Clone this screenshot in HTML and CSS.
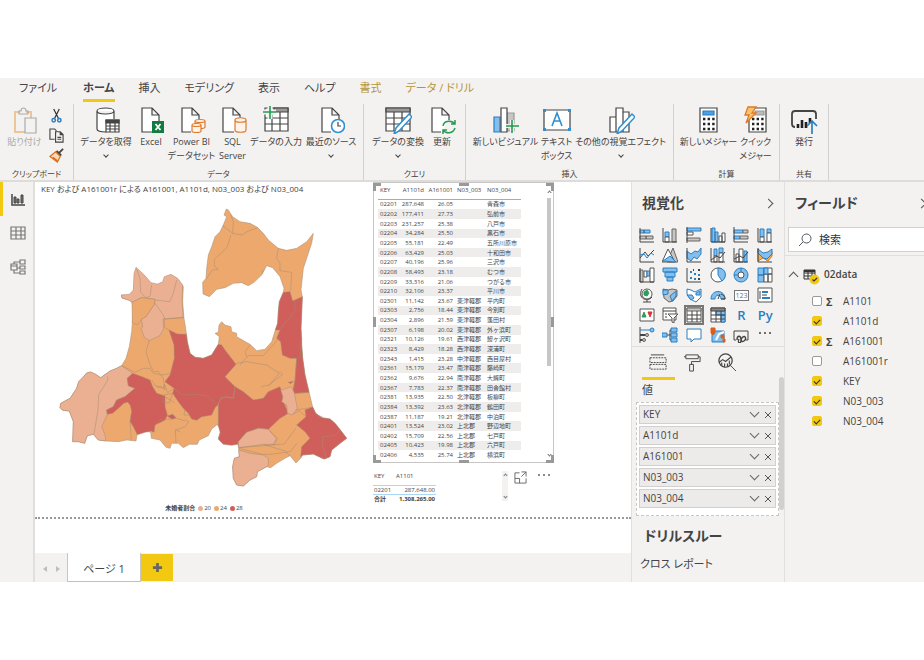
FILE: index.html
```html
<!DOCTYPE html>
<html lang="ja">
<head>
    <meta charset="UTF-8">
    <meta name="viewport" content="width=device-width, initial-scale=1.0">
    <title>Power BI Desktop</title>
    <link rel="stylesheet" href="styles.css">
</head>
<body>
    <header class="ribbon">
        <nav class="tabs">
            <a href="#" class="file">ファイル</a>
            <a href="#" class="active">ホーム</a>
            <a href="#">挿入</a>
            <a href="#">モデリング</a>
            <a href="#">表示</a>
            <a href="#">ヘルプ</a>
            <a href="#" class="context">書式</a>
            <a href="#" class="context">データ / ドリル</a>
        </nav>
        <div class="groups">
            <section class="group clipboard">
                <div class="tools">
                    <button class="tool disabled">
                        <svg viewBox="0 0 28 28"><path d="M9 6H4v20h10M20 12V6h-5" stroke="#ecc59b" stroke-width="2"/><path d="M8 8V5h2c0-4 5-4 5 0h2v3z" stroke="#aaa"/><path d="M14 12h11v15H14z" fill="#f3f2f1" stroke="#aaa"/></svg>
                        <span>貼り付け</span>
                    </button>
                    <div class="small-tools">
                        <button aria-label="切り取り"><svg viewBox="0 0 16 16"><path d="M5 1l5 10M11 1L6 11" stroke="#333" stroke-width="1.3"/><circle cx="5" cy="13" r="1.8" stroke="#2a7fc1" stroke-width="1.6"/><circle cx="11" cy="13" r="1.8" stroke="#2a7fc1" stroke-width="1.6"/></svg></button>
                        <button aria-label="コピー"><svg viewBox="0 0 16 16"><path d="M6 12H1V1h5l2 2M7 4h5l3 3v8H7zM12 4v3h3M9 10h4M9 12h4" stroke="#444" stroke-width="1.2"/></svg></button>
                        <button aria-label="書式のコピー"><svg viewBox="0 0 16 16"><path d="M15 1l-4 4M8 3l5 5" stroke="#444" stroke-width="2"/><path d="M7 4l5 5-3 6-8-6z" fill="#fbd9b5" stroke="#d8701b" stroke-width="1.3"/><path d="M4 10l5 4" stroke="#d8701b" stroke-width="2"/></svg></button>
                    </div>
                </div>
                <h2>クリップボード</h2>
            </section>
            <section class="group data">
                <div class="tools">
                    <button class="tool">
                        <svg viewBox="0 0 28 28"><path d="M14 26c-6 0-9-1-9-3V5c0-4 17-4 17 0v8M5 5c0 4 17 4 17 0" fill="#fff"/><path d="M14 14h13v12H14z" fill="#fff"/><path d="M14 14h13v3H14z" fill="#444"/><path d="M14 20h13M14 23h13M18 17v9M23 17v9"/></svg>
                        <span>データを取得</span><i class="chev"></i>
                    </button>
                    <button class="tool">
                        <svg viewBox="0 0 28 28"><path d="M15 26H5V2h10l7 7v6M15 2v7h7" fill="#fff"/><path d="M15 15h12v12H15z" fill="#107c41" stroke="none"/><path d="M18.500 18l5 6M23.500 18l-5 6" stroke="#fff" stroke-width="1.8"/></svg>
                        <span>Excel</span>
                    </button>
                    <button class="tool">
                        <svg viewBox="0 0 28 28"><path d="M13 26H4V2h10l7 7v4M14 2v7h7" fill="#fff"/><g fill="#fdf3ea" stroke="#dd7a2b"><path d="M17 15v6c0 2 10 2 10 0v-6c0-2-10-2-10 0c0 2 10 2 10 0"/><path d="M14 19v6c0 2 9 2 9 0v-6c0-2-9-2-9 0c0 2 9 2 9 0"/></g></svg>
                        <span>Power BI<br>データセット</span>
                    </button>
                    <button class="tool">
                        <svg viewBox="0 0 28 28"><path d="M15 26H4V2h10l7 7v3M14 2v7h7" fill="#fff"/><path d="M16 14v10c0 3 11 3 11 0V14c0-3-11-3-11 0c0 3 11 3 11 0" fill="#fdf3ea" stroke="#dd7a2b"/></svg>
                        <span>SQL<br>Server</span>
                    </button>
                    <button class="tool">
                        <svg viewBox="0 0 28 28"><path d="M3 2h23v23H3z" fill="#fff"/><path d="M12 2h14v4H12z" fill="#999"/><path d="M3 12h23M3 18h23M10 8v17M18 6v19"/><path d="M8 0v13M1 6h13" stroke="#f3f2f1" stroke-width="5"/><path d="M8 0v13M1 6h13" stroke="#259a53" stroke-width="1.6"/></svg>
                        <span>データの入力</span>
                    </button>
                    <button class="tool">
                        <svg viewBox="0 0 28 28"><path d="M14 26H5V2h10l7 7v4M15 2v7h7" fill="#fff"/><circle cx="21" cy="20" r="6.500" fill="#fff" stroke="#2f8fd0" stroke-width="1.6"/><path d="M21 16v4h3"/></svg>
                        <span>最近のソース</span><i class="chev"></i>
                    </button>
                </div>
                <h2>データ</h2>
            </section>
            <section class="group query">
                <div class="tools">
                    <button class="tool">
                        <svg viewBox="0 0 28 28"><path d="M2 2h24v23H2z" fill="#fff"/><path d="M2 2h24v4H2z" fill="#999"/><path d="M2 12h24M2 18h24M10 6v19M18 6v19"/><path d="M25 8l3 3-13 14-5 3 2-6z" fill="#fff" stroke="#2f8fd0" stroke-width="1.500"/></svg>
                        <span>データの変換</span><i class="chev"></i>
                    </button>
                    <button class="tool">
                        <svg viewBox="0 0 28 28"><path d="M13 26H4V2h10l7 7v5M14 2v7h7" fill="#fff"/><path d="M15 20c1-6 9-6 12-2M27 14v4h-4M27 22c-2 6-9 6-12 2M15 28v-4h4" stroke="#259a53" stroke-width="1.500"/></svg>
                        <span>更新</span>
                    </button>
                </div>
                <h2>クエリ</h2>
            </section>
            <section class="group insert">
                <div class="tools">
                    <button class="tool">
                        <svg viewBox="0 0 28 28"><path d="M15 7h7v18h-7z" fill="#c8c6c4" stroke="#999"/><path d="M2 11h6v15H2z" fill="#83beec" stroke="#2a7fc1"/><path d="M9 2h6v24H9z" fill="#fff"/><path d="M20 14v13M14 20h13" stroke="#f3f2f1" stroke-width="4"/><path d="M20 14v13M14 20h13" stroke="#259a53" stroke-width="1.600"/></svg>
                        <span>新しいビジュアル</span>
                    </button>
                    <button class="tool">
                        <svg viewBox="0 0 28 28"><path d="M1 4h26v20H1z" fill="#fff"/><path d="M9 20l5-13 5 13M11 15h6" stroke="#2f8fd0" stroke-width="1.600"/><path d="M0 3h3v3H0zM25 3h3v3h-3zM0 22h3v3H0zM25 22h3v3h-3z" fill="#2f8fd0" stroke="none"/></svg>
                        <span>テキスト<br>ボックス</span>
                    </button>
                    <button class="tool">
                        <svg viewBox="0 0 28 28"><path d="M3 11h6v15H3zM9 2h7v24H9zM16 6h6v20h-6z" fill="#fff"/><path d="M25 8l3 3-13 14-5 3 2-6z" fill="#fff" stroke="#2f8fd0" stroke-width="1.500"/></svg>
                        <span>その他の視覚エフェクト</span><i class="chev"></i>
                    </button>
                </div>
                <h2>挿入</h2>
            </section>
            <section class="group calc">
                <div class="tools">
                    <button class="tool">
                        <svg viewBox="0 0 28 28"><path d="M5 2h17v24H5z" fill="#fff"/><path d="M8 5h11v4H8z" fill="#4aa0e0" stroke="#2a7fc1"/><path d="M8 13h12M8 18h12M8 23h12" stroke="#222" stroke-width="2.400" stroke-dasharray="2.400 2.200"/></svg>
                        <span>新しいメジャー</span>
                    </button>
                    <button class="tool">
                        <svg viewBox="0 0 28 28"><path d="M7 2h17v24H7z" fill="#fff"/><path d="M13 5h9v4h-9z" fill="#bbb" stroke="#999"/><path d="M10 13h12M10 18h12M10 23h12" stroke="#222" stroke-width="2.400" stroke-dasharray="2.400 2.200"/><path d="M6 1h8l-4 6h4L4 17l3-8H3z" fill="#fbc16b" stroke="#dd7a2b" stroke-width="1.300"/></svg>
                        <span>クイック<br>メジャー</span>
                    </button>
                </div>
                <h2>計算</h2>
            </section>
            <section class="group share">
                <div class="tools">
                    <button class="tool">
                        <svg viewBox="0 0 28 28"><path d="M5 21c-2 0-3-1-3-3V8c0-2 1-3 3-3h18c2 0 3 1 3 3v5" stroke-width="1.800"/><path d="M8 22v-4M12 22v-8M16 22v-6M20 17v-5" stroke="#222" stroke-width="2.600"/><path d="M22 28V15M17 20l5-5 5 5" stroke="#2a7fc1" stroke-width="1.700"/></svg>
                        <span>発行</span>
                    </button>
                </div>
                <h2>共有</h2>
            </section>
        </div>
    </header>

    <main class="workspace">
        <nav class="views">
            <button class="current" aria-label="レポート"><svg viewBox="0 0 16 16"><path d="M2 3v11h13" stroke="#444" stroke-width="1.500"/><path d="M4 6h2v6H4zM7 8h2v4H7zM11 4h2v8h-2z" fill="#777" stroke="#444"/></svg></button>
            <button aria-label="データ"><svg viewBox="0 0 16 16"><path d="M1 2h14v12H1zM1 6h14M1 10h14M6 2v12M11 2v12" stroke="#777" stroke-width="1.200"/></svg></button>
            <button aria-label="モデル"><svg viewBox="0 0 16 16"><path d="M1 5h6v6H1zM10 1h5v4h-5zM10 7h5v3h-5zM10 12h5v3h-5zM1 7h6M4 5V3h6M7 9h3M4 11v3h6" stroke="#777" stroke-width="1.200"/></svg></button>
        </nav>

        <section class="canvas">
            <div class="report">
                <div class="map">
                    <h3>KEY および A161001r による A161001, A1101d, N03_003 および N03_004</h3>
                    <svg viewBox="0 0 930 900" role="img" aria-label="青森県の地図">
                        <path class="mid" d="M214 300l2 9 22 7 8 6 4 23-3 35-2 30-7 45-10 35-13 22-15 8-20 8-28 20-15-10-15-7-12 3-12 14-12 12-6 20-20 30-28 15-2 13 8 8 20 2 12 32-2 60 17 0 19 5 8-23 18-4 15 17 23 3 37 2 25-5 28 3 4-23 23-7 17 4 2 18 26 5 18 22 12 3 5-15 20 0 15 13 18-10 24 0 6-13 27-13 10-20 15-12 8 2 3 18-6 20 15 15 25 3 18-3 3 15 2 25-15 5-5 25 2 35 10 20 20 3 20-18 20-10 2-15 28-15 12 3 18-13 25-15 15-8 18 22 14-14 6-10 32-3 32 15 18-7 5-20 25-20 20-15-15-20-20-25-15-13-25-4-18-13-9-19-11-46-12-50-7-50-3-40 0-20-2-30 4-95-4-20 7-65 25-75 5-30-20 25-30 20-30 6-25-6-30-25-15-20-18-18-22-12-30-5-22-15-13-20-6-3-7 18 8 5-10 25-10 20-15 15-10 30-10 25-5 40-2 30-10 12 1 35 19 8 22-22 25-5 25-13 25-2 20 9 17-10 23-22 15-28 18 6 22 27 12 35-2 12-12 28-3 30-2 35-7 20-11 35-20 23-25 4-20-19-40-23 0-10-15-5-2-15-18-5-10-10-8 10-2 22-10 3 13 10-3 23-20 32-25 10-25-3-15-12-8-35-5-40-5-30-4-50 2-45-15-20-20-12-20 7-5 15-15 7-20-4-20-23-25-23-6 18-2 50-12 13z"/>
                        <path class="low" d="M214 300l2 9 22 7 8 6 29-14 40 5-2 15-25 37-14 8 4 20-4 10 9 24 15 10 31-15 12-20-2-30 60-5-3-52 2-45-15-20-20-12-20 7-5 15-15 7-20-4-20-23-25-23-6 18-2 50-12 13z"/>
                        <path class="mid" d="M246 322l29-14 40 5-2 15-25 37-14 8-12 17-15-7z"/>
                        <path class="low" d="M215 512l33 23-16 15 3 22 20 8-30 25-25 10-10 20-20 10 2 13-17 37 10 25 3 18-23-3-15-17-18 4-8 23-19-5h-17l2-60-12-32-20-2-8-8 2-13 28-15 20-30 6-20 12-12 12-14 12-3 15 7 15 10 28-20 20-8z"/>
                        <path class="high" d="M248 535l28 10 24 10 8 20 12 20 25 8v32l7 25-7 15-30 15-3 22-10-4-17 4-23 7-12-24-10-16 5-30-4-18-8-10-12 4-16 15-17 15-16 3-2-13 20-10 10-20 25-10 30-25-20-8-3-22z"/>
                        <path class="high" d="M357 405l25 12 27 1 3 22 8 35 15 12 25 3 25-10 20-32 10 2 10 15 33 43-33 37 30 30-5 35-20-5-18 5-7 18-10 10-10 22-30 5-15 11-15-4-10-17-15-15-15-20-17-25 4-15-27-20 15-20 13-50-1-40z"/>
                        <path class="high" d="M555 575l25 15 30 25 30-5 15-20 35-15 7 25 3 20 15 35-25 15-35 33-30-3-35 12-25 28-2 8-18 3-25-3-15-15 6-20-6-20 0-62 7-21 18-5 20 5z"/>
                        <path class="high" d="M700 292l20-2 8 28 29-13-4 95 2 50 3 40 7 50 12 52-42 3-7-5 7-35 5-65-20 0-23-10-5-40-12-10 10-25h-14l7-20 2-35 3-30z"/>
                        <path class="high" d="M788 636l-23 9 3 20-28 25 25 20 15 20-25 25-3 30 6-5 32-3 32 15 18-7 5-20 25-20 20-15-15-20-20-25-15-13-25-4-18-13z"/>
                        <path class="low" d="M692 585l12-3 18-7 10 15 5 25 5 25-14 20-16-5-2-25-15-10 4-15zM565 740l25-28 35-12 30 3 25 27-5 18-35 0-74 10zM566 765l34 10 40 5 15 10v20l-5 5-28 15-2 15-20 10-20 18-20-3-10-20-2-35 5-25 15-5z"/>
                        <path class="high" d="M352 663l16-5 10 10-12 5zM715 562l15-3-8 7z"/>
                        <path class="edge" d="M542 60l8 20-2 35-30-23M548 115l28 5 15-10 32-12M543 120l-12 38-38 35 0 20 12 10-18 2-18 27M685 160l-5 30 10 15 0 22 35 5-3 57M260 222l10 30 2 40 16 16 12-4 5-34M380 255l-10 40-10 25-45-5M315 325l25 35 4 12 58-4M342 372l2 25 15 10M298 435l-10 35 12 40 10 18M172 544l2 10-28 45-2 45-12 74M215 512l40 20 25-12 20 0 10 15 25 5 30-5M310 530l15 0 15 20 5 35-10-10-18-2-12-18M320 575l20 5 3-12 10 25 16-12M340 600l28-5-10 28h-20zM345 605l28 18M372 580l25 20 40-2 35 5 33 28M510 610l20-3 20 3 5-25M560 505l30-5 60 10 38 25-30 35-25 5M590 485l-5-15 15-20M570 510l25-28 45 0 50-55M688 528l10 10-45 35M315 690l15-15 50-5 25 8M378 745l-2-40 30-10 10-15-10-6M376 705l15 5M240 680l4 56M740 490l-5 65-5 35M735 318v30l-45 55M755 430l-5 60M735 595l42-3M737 645l50-8M768 665l-20-18-20 10M655 703l25 27-12 20-100 8M668 750l35-3 35-48M566 760l70 18 25 0 60-8 20-25M640 748l65 20 15 14M818 725l0 30 12 37M818 725l35-3 15-15 8 3M405 640l-3 20 16 0M640 235l-5-5 8-5M800 660l18 6"/>
                    </svg>
                    <ul class="legend">
                        <li><b>未婚者割合</b></li>
                        <li class="dot c20">20</li>
                        <li class="dot c24">24</li>
                        <li class="dot c28">28</li>
                    </ul>
                </div>

                <div class="side">
                    <div class="frame">
                        <i class="grip tl"></i><i class="grip tc"></i><i class="grip tr"></i><i class="grip ml"></i>
                        <i class="grip mr"></i><i class="grip bl"></i><i class="grip bc"></i><i class="grip br"></i>
                        <table class="cities">
                            <thead>
                                <tr><th>KEY</th><th>A1101d</th><th>A161001</th><th>N03_003</th><th>N03_004</th></tr>
                            </thead>
                            <tbody>
                                <tr><td>02201</td><td>287,648</td><td>26.05</td><td></td><td>青森市</td></tr>
                                <tr><td>02202</td><td>177,411</td><td>27.73</td><td></td><td>弘前市</td></tr>
                                <tr><td>02203</td><td>231,257</td><td>25.38</td><td></td><td>八戸市</td></tr>
                                <tr><td>02204</td><td>34,284</td><td>25.50</td><td></td><td>黒石市</td></tr>
                                <tr><td>02205</td><td>55,181</td><td>22.49</td><td></td><td>五所川原市</td></tr>
                                <tr><td>02206</td><td>63,429</td><td>25.03</td><td></td><td>十和田市</td></tr>
                                <tr><td>02207</td><td>40,196</td><td>25.96</td><td></td><td>三沢市</td></tr>
                                <tr><td>02208</td><td>58,493</td><td>23.18</td><td></td><td>むつ市</td></tr>
                                <tr><td>02209</td><td>33,316</td><td>21.06</td><td></td><td>つがる市</td></tr>
                                <tr><td>02210</td><td>32,106</td><td>23.37</td><td></td><td>平川市</td></tr>
                                <tr><td>02301</td><td>11,142</td><td>23.67</td><td>東津軽郡</td><td>平内町</td></tr>
                                <tr><td>02303</td><td>2,756</td><td>18.44</td><td>東津軽郡</td><td>今別町</td></tr>
                                <tr><td>02304</td><td>2,896</td><td>21.59</td><td>東津軽郡</td><td>蓬田村</td></tr>
                                <tr><td>02307</td><td>6,198</td><td>20.02</td><td>東津軽郡</td><td>外ヶ浜町</td></tr>
                                <tr><td>02321</td><td>10,126</td><td>19.61</td><td>西津軽郡</td><td>鰺ヶ沢町</td></tr>
                                <tr><td>02323</td><td>8,429</td><td>18.28</td><td>西津軽郡</td><td>深浦町</td></tr>
                                <tr><td>02343</td><td>1,415</td><td>23.28</td><td>中津軽郡</td><td>西目屋村</td></tr>
                                <tr><td>02361</td><td>15,179</td><td>23.47</td><td>南津軽郡</td><td>藤崎町</td></tr>
                                <tr><td>02362</td><td>9,676</td><td>22.94</td><td>南津軽郡</td><td>大鰐町</td></tr>
                                <tr><td>02367</td><td>7,783</td><td>22.37</td><td>南津軽郡</td><td>田舎館村</td></tr>
                                <tr><td>02381</td><td>13,935</td><td>22.50</td><td>北津軽郡</td><td>板柳町</td></tr>
                                <tr><td>02384</td><td>13,392</td><td>23.63</td><td>北津軽郡</td><td>鶴田町</td></tr>
                                <tr><td>02387</td><td>11,187</td><td>19.21</td><td>北津軽郡</td><td>中泊町</td></tr>
                                <tr><td>02401</td><td>13,524</td><td>23.02</td><td>上北郡</td><td>野辺地町</td></tr>
                                <tr><td>02402</td><td>15,709</td><td>22.56</td><td>上北郡</td><td>七戸町</td></tr>
                                <tr><td>02405</td><td>10,423</td><td>19.98</td><td>上北郡</td><td>六戸町</td></tr>
                                <tr><td>02406</td><td>4,535</td><td>25.74</td><td>上北郡</td><td>横浜町</td></tr>
                            </tbody>
                        </table>
                        <div class="scroll"><i class="up"></i><i class="thumb"></i><i class="down"></i></div>
                    </div>
                    <div class="total-row">
                        <table class="total">
                            <thead><tr><th>KEY</th><th>A1101</th></tr></thead>
                            <tbody><tr><td>02201</td><td>287,648.00</td></tr></tbody>
                            <tfoot><tr><td>合計</td><td>1,308,265.00</td></tr></tfoot>
                        </table>
                        <div class="scroll short"><i class="up"></i><i class="down"></i></div>
                        <button class="focus" aria-label="フォーカス モード"><svg viewBox="0 0 14 14"><path d="M6 2H1v11h12V8M8 1h5v5M13 1L8 6M1 8h5v5" stroke="#666"/></svg></button>
                        <button class="more" aria-label="その他のオプション"><svg viewBox="0 0 14 4"><path d="M1 2h2M6 2h2M11 2h2" stroke="#666" stroke-width="1.500"/></svg></button>
                    </div>
                </div>
            </div>
            <footer class="pages">
                <button class="step" aria-label="前へ"><i class="prev"></i></button>
                <button class="step" aria-label="次へ"><i class="next"></i></button>
                <button class="page">ページ 1</button>
                <button class="add" aria-label="ページの追加"><svg viewBox="0 0 12 12"><path d="M6 1v10M1 6h10" stroke="#666" stroke-width="3"/></svg></button>
            </footer>
        </section>

        <aside class="viz">
            <div class="pane-head"><h1>視覚化</h1><button aria-label="折りたたむ"><i class="right"></i></button></div>
            <div class="gallery">
                <button><svg viewBox="0 0 16 16"><path class="b" d="M1 3h10v3H1z"/><path class="g" d="M1 9h13v3H1z"/><path d="M5 3v3M7 9v3M1 1v14h14"/></svg></button>
                <button><svg viewBox="0 0 16 16"><path class="b" d="M3 5h4v5H3z"/><path class="w" d="M3 10h4v5H3z"/><path class="g" d="M10 2h4v13h-4z"/><path d="M1 1v14h14"/></svg></button>
                <button><svg viewBox="0 0 16 16"><path class="b" d="M1 1h14v3H1z"/><path class="w" d="M1 5h6v3H1z"/><path class="g" d="M1 11h13v3H1z"/><path d="M1 0v16"/></svg></button>
                <button><svg viewBox="0 0 16 16"><path class="b" d="M2 1h3v14H2zM5 5h3v10H5z"/><path class="w" d="M9 9h3v6H9zM12 6h3v9h-3z"/><path d="M1 1v14h14"/></svg></button>
                <button><svg viewBox="0 0 16 16"><path class="b" d="M1 3h9v3H1zM1 9h6v3H1z"/><path class="g" d="M10 3h5v3h-5zM7 9h8v3H7z"/><path d="M1 0v15h14"/></svg></button>
                <button><svg viewBox="0 0 16 16"><path class="b" d="M3 2h4v8H3zM10 2h4v4h-4z"/><path class="w" d="M3 10h4v5H3zM10 6h4v9h-4z"/><path d="M1 1v14h14"/></svg></button>

                <button><svg viewBox="0 0 16 16"><path d="M1 1v14h14M1 11l5-6 3 4 6-6"/><path class="l" d="M1 8l4-1 3 4 4-5 3 2"/></svg></button>
                <button><svg viewBox="0 0 16 16"><path class="g" d="M5 15L11 1l5 14z"/><path class="w" d="M0 15l6-13 7 13z"/><path class="b" d="M1 14l7-5 6 6z"/></svg></button>
                <button><svg viewBox="0 0 16 16"><path class="b" d="M1 4l4 3 4-3 3 1 3-4v6l-4 5-3-2-3 4-4-3z"/><path d="M1 1v14h14"/></svg></button>
                <button><svg viewBox="0 0 16 16"><path class="b" d="M4 2h3v7H4zM9 1h4v5H9z"/><path class="w" d="M4 9h3v6H4zM9 6h4v9H9z"/><path d="M1 1v14h14M1 13l6-4 3 2 5-6"/></svg></button>
                <button><svg viewBox="0 0 16 16"><path class="w" d="M3 7h3v8H3zM6 2h4v13H6z"/><path class="b" d="M11 4h3v11h-3z"/><path d="M1 1v14h14M1 12l6-3 3 2 5-6"/></svg></button>
                <button><svg viewBox="0 0 16 16"><path d="M1 3l5 7 5 0 4-5v4l-4 5-5-3-5 3z" fill="#f5b057" stroke="#c77a27"/><path class="b" d="M1 2l5 4 5-1 4-3v5l-5 5-4-1-5-5z"/><path d="M1 1v14h14"/></svg></button>

                <button><svg viewBox="0 0 16 16"><path class="g" d="M1 3h3v12H1z"/><path class="w" d="M5 4h3v6H5z"/><path class="b" d="M8 4h3v5H8z"/><path class="w" d="M11 1h4v14h-4z"/><path d="M1 1v14h14"/></svg></button>
                <button><svg viewBox="0 0 16 16"><path class="b" d="M1 1h14v4H1zM3 5h10v5H3zM5 10h6v4H5z"/></svg></button>
                <button><svg viewBox="0 0 16 16"><path d="M1 1v14h14"/><path class="l" d="M4 5h2M8 7h2M4 11h2M12 8h2M8 12h2" stroke-width="2"/><path d="M12 3h2M7 3h1M12 12h2" stroke-width="2"/></svg></button>
                <button><svg viewBox="0 0 16 16"><circle class="w" cx="8" cy="8" r="7"/><path class="b" d="M8 1c9 0 9 10 4 13L8 8z"/></svg></button>
                <button><svg viewBox="0 0 16 16"><circle class="b" cx="8" cy="8" r="7"/><circle class="w" cx="8" cy="8" r="3"/><path d="M8 1v4M1 8h4" class="l"/></svg></button>
                <button><svg viewBox="0 0 16 16"><path class="b" d="M1 1h6v7H1zM1 8h6v7H1z"/><path class="w" d="M7 1h8v6H7zM7 7h4v8H7zM11 7h4v8h-4z"/><path class="b" d="M7 1h4v6H7z"/></svg></button>

                <button><svg viewBox="0 0 16 16"><circle class="w" cx="8" cy="7" r="5"/><path d="M5 5l3-2 2 3-2 3-3-1z" fill="#2e9d5c" stroke="#2e9d5c"/><path d="M3 2c-5 9 5 14 10 8M8 13v2M4 15h8"/></svg></button>
                <button><svg viewBox="0 0 16 16"><path class="g" d="M1 2l5 1 4-1 5 1v6l-4 5-4 1-5-4z"/><path class="b" d="M1 3h5v4l-5 1zM8 9l6-5v5l-4 5z"/></svg></button>
                <button><svg viewBox="0 0 16 16"><path class="w o" d="M1 2l4 1 4 2 6-3v8l-5 5-6-3-3-5z"/><path class="b" d="M1 8h5l2 3-3 2zM10 6l4-2v4h-4z"/></svg></button>
                <button><svg viewBox="0 0 16 16"><path class="b" d="M1 12C1 2 15 2 15 12h-4c0-5-6-5-6 0z"/><path d="M8 12l2-5M11 7c3 1 4 3 4 5h-4"/></svg></button>
                <button class="num"><span>123</span></button>
                <button><svg viewBox="0 0 16 16"><path class="w" d="M1 1h14v14H1z"/><path d="M3 4v8"/><path class="l" d="M5 5h6M5 11h8" stroke-width="2"/><path d="M5 8h5"/></svg></button>

                <button><svg viewBox="0 0 16 16"><path class="w" d="M1 2h14v12H1z"/><path d="M3 10l2-5 2 5z" fill="#2e9d5c" stroke="#2e9d5c"/><path d="M9 5h4l-2 5z" fill="#d33" stroke="#d33"/></svg></button>
                <button><svg viewBox="0 0 16 16"><path class="w" d="M1 1h13v12H1z"/><path d="M1 4h13M3 7h2M3 10h2"/><path class="w" d="M6 7h10l-4 4v5l-2-1v-4z"/></svg></button>
                <button class="picked"><svg viewBox="0 0 16 16"><path class="w" d="M1 1h14v14H1z"/><path class="g" d="M1 1h14v3H1z"/><path d="M1 8h14M1 12h14M6 4v11M11 4v11"/></svg></button>
                <button><svg viewBox="0 0 16 16"><path class="w" d="M1 1h14v14H1z"/><path class="b" d="M6 4h9v4H6zM11 8h4v7h-4z"/><path d="M1 1h14v3H1z" fill="#888"/><path d="M1 8h14M1 12h14M6 4v11M11 4v11"/></svg></button>
                <button class="word">R</button>
                <button class="word">Py</button>

                <button><svg viewBox="0 0 16 16"><path d="M1 0v16"/><path class="l" d="M1 3h10"/><circle class="b" cx="13" cy="3" r="2"/><path d="M1 8h6M1 13h3" stroke-width="2"/><circle class="g" cx="8" cy="8" r="1.500"/><circle class="g" cx="5" cy="13" r="1.500"/></svg></button>
                <button><svg viewBox="0 0 16 16"><path d="M5 8h4M8 8V3h2M8 8v5h2"/><path class="b" d="M0 6h5v4H0zM9 1h6v4H9zM9 6h6v4H9zM9 11h6v4H9z"/></svg></button>
                <button><svg viewBox="0 0 16 16"><path class="w o" d="M1 2h14v10H8l-3 3v-3H1z"/></svg></button>
                <button><svg viewBox="0 0 16 16"><path class="b" d="M2 4h12v11H2z"/><path d="M6 13l3-6 5-2" stroke="#fff" stroke-width="2"/><path d="M1 1h4v5L3 8 1 6zM11 8h3v3h-3zM13 12h2v3h-2z" fill="#d8601b" stroke="#d8601b"/></svg></button>
                <button><svg viewBox="0 0 16 16"><path d="M3 13H1V4h14v9h-2"/><path d="M4 13c0-5 4-5 4 0s-4 3-2-1M9 11c3-4 5 1 2 3s-4-2-1-4" stroke-width="1.400"/></svg></button>
                <button><svg viewBox="0 0 16 16"><path d="M2 6h2M7 6h2M12 6h2" stroke-width="1.500"/></svg></button>
            </div>
            <div class="modes">
                <button class="on" aria-label="フィールド"><svg viewBox="0 0 20 20"><path d="M2 2h14"/><path d="M1 5h17v5H1zM1 12h17v5H1z" stroke-dasharray="2 1"/></svg></button>
                <button aria-label="書式"><svg viewBox="0 0 20 20"><path d="M3 2h13v4H3zM16 4h2v5H9v3M7 12h4v7H7zM3 4H1"/></svg></button>
                <button aria-label="分析"><svg viewBox="0 0 20 20"><circle cx="9" cy="8" r="7" stroke-width="1.300"/><path d="M14 13l6 6"/><path d="M2 10l4-3 3 2 6-5M5 13v-3M8 15v-4M11 14v-3M13 12V8" stroke-width="1.200"/></svg></button>
            </div>
            <h4>値</h4>
            <ul class="well">
                <li>KEY<button aria-label="KEY のメニュー"><i class="open"></i></button><button aria-label="KEY の削除"><svg viewBox="0 0 8 8"><path d="M1 1l6 6M7 1L1 7"/></svg></button></li>
                <li>A1101d<button aria-label="A1101d のメニュー"><i class="open"></i></button><button aria-label="A1101d の削除"><svg viewBox="0 0 8 8"><path d="M1 1l6 6M7 1L1 7"/></svg></button></li>
                <li>A161001<button aria-label="A161001 のメニュー"><i class="open"></i></button><button aria-label="A161001 の削除"><svg viewBox="0 0 8 8"><path d="M1 1l6 6M7 1L1 7"/></svg></button></li>
                <li>N03_003<button aria-label="N03_003 のメニュー"><i class="open"></i></button><button aria-label="N03_003 の削除"><svg viewBox="0 0 8 8"><path d="M1 1l6 6M7 1L1 7"/></svg></button></li>
                <li>N03_004<button aria-label="N03_004 のメニュー"><i class="open"></i></button><button aria-label="N03_004 の削除"><svg viewBox="0 0 8 8"><path d="M1 1l6 6M7 1L1 7"/></svg></button></li>
            </ul>
            <i class="pane-thumb"></i>
            <h2>ドリルスルー</h2>
            <p>クロス レポート</p>
        </aside>

        <aside class="fields">
            <div class="pane-head"><h1>フィールド</h1><button aria-label="折りたたむ"><i class="right"></i></button></div>
            <label class="search">
                <svg viewBox="0 0 14 14"><circle cx="8.500" cy="5.500" r="4.500" stroke="#555"/><path d="M5 9l-4 4" stroke="#555"/></svg>
                <input type="search" placeholder="検索" aria-label="検索">
            </label>
            <div class="tree">
                <button class="node">
                    <i class="fold"></i>
                    <svg viewBox="0 0 18 18"><path d="M2 3h11v9H2zM2 6h11M2 9h11M6 3v9M10 3v9" stroke="#333"/><path d="M2 3h11v2H2z" fill="#333"/><circle cx="12.500" cy="12.500" r="5" fill="#f2c811"/><path d="M10.500 12.500l1.500 1.500 3-3" stroke="#333" stroke-width="1.200"/></svg>
                    02data
                </button>
                <label><input type="checkbox"><b>Σ</b>A1101</label>
                <label><input type="checkbox" checked><b></b>A1101d</label>
                <label><input type="checkbox" checked><b>Σ</b>A161001</label>
                <label><input type="checkbox"><b></b>A161001r</label>
                <label><input type="checkbox" checked><b></b>KEY</label>
                <label><input type="checkbox" checked><b></b>N03_003</label>
                <label><input type="checkbox" checked><b></b>N03_004</label>
            </div>
        </aside>
    </main>
</body>
</html>
```

FILE: styles.css
```css
* {
    box-sizing: border-box;
}
body {
    margin: 78px 0;
    background: #fff;
    color: #444;
    font-family: "Open Sans", "Noto Sans CJK JP", sans-serif;
    font-size: 10px;
    overflow-x: hidden;
}
h1, h2, h3, h4, p, ul {
    margin: 0;
    padding: 0;
}
ul {
    list-style: none;
}
button {
    padding: 0;
    border: none;
    background: none;
    color: inherit;
    font: inherit;
    cursor: pointer;
}
svg {
    display: block;
    fill: none;
}
a {
    color: inherit;
    text-decoration: none;
}

/* ribbon */
.ribbon {
    background: #f3f2f1;
    border-bottom: 2px solid #dddcdb;
    font-feature-settings: "palt";
}
.tabs {
    display: flex;
    gap: 24px;
    height: 26px;
    padding-left: 19px;
    font-size: 11px;
    line-height: 20px;
    white-space: nowrap;
}
.tabs .file {
    margin-right: 2px;
}
.tabs .active {
    height: 24px;
    border-bottom: 3px solid #f2c811;
    font-weight: bold;
}
.tabs .context {
    color: #b5953a;
}
.groups {
    display: flex;
}
.group {
    height: 76px;
    display: flex;
    flex-direction: column;
    justify-content: space-between;
    border-right: 1px solid #d2d0ce;
}
.group h2 {
    font-size: 8px;
    font-weight: normal;
    line-height: 13px;
    text-align: center;
}
.tools {
    display: grid;
    justify-content: center;
    align-items: start;
    padding-top: 2px;
}
.clipboard {
    width: 74px;
}
.clipboard .tools {
    grid-template-columns: 40px 20px;
    gap: 4px;
}
.data {
    width: 290px;
}
.data .tools {
    grid-template-columns: 57px 33px 48px 34px 53px 57px;
}
.query {
    width: 102px;
}
.query .tools {
    grid-template-columns: 60px 28px;
    justify-content: start;
    padding-left: 4px;
}
.insert {
    width: 208px;
}
.insert .tools {
    grid-template-columns: 66px 36px 92px;
}
.calc {
    width: 106px;
}
.calc .tools {
    grid-template-columns: 58px 36px;
}
.share {
    width: 49px;
}
.tool {
    display: flex;
    flex-direction: column;
    align-items: center;
    font-size: 9px;
    line-height: 14px;
    white-space: nowrap;
}
.tool span {
    display: flex;
    justify-content: center;
    text-align: center;
}
.tool svg {
    width: 28px;
    height: 28px;
    margin-bottom: 1px;
    stroke: #444;
    stroke-width: 1.2;
}
.tool.disabled {
    color: #aaa;
}
.small-tools {
    display: grid;
    gap: 5px;
    padding-top: 2px;
}
.small-tools svg {
    width: 15px;
    height: 15px;
}
.chev {
    width: 4px;
    height: 4px;
    margin-top: 4px;
    border-right: 1px solid #444;
    border-bottom: 1px solid #444;
    transform: rotate(45deg);
}

/* left bar */
.workspace {
    display: flex;
    min-height: 400px;
}
.views {
    flex: none;
    width: 35px;
    background: #f3f2f1;
    border-right: 2px solid #e1dfdd;
}
.views button {
    display: flex;
    align-items: center;
    justify-content: center;
    width: 100%;
    height: 34px;
    border-left: 3px solid transparent;
}
.views .current {
    border-left-color: #f2c811;
}
.views svg {
    width: 16px;
    height: 16px;
}

/* report canvas */
.canvas {
    flex: 1;
    min-width: 0;
    display: flex;
    flex-direction: column;
    justify-content: space-between;
}
.report {
    display: grid;
    grid-template-columns: 338px 190px;
    border-bottom: 2px dotted #999;
    font-size: 6px;
}
.map h3 {
    padding-left: 6px;
    font-size: 8px;
    font-weight: normal;
    line-height: 13px;
    white-space: nowrap;
    font-feature-settings: "palt";
}
.map > svg {
    width: 310px;
    height: 300px;
    margin-left: 15px;
    stroke: #a58a72;
    stroke-width: 1.5;
    stroke-linejoin: round;
}
.low {
    fill: #ebb092;
}
.mid {
    fill: #eda96d;
}
.high {
    fill: #d05f5b;
}
.legend {
    display: flex;
    justify-content: center;
    gap: 3px;
    padding: 8px 0 4px;
    line-height: 10px;
}
.legend li {
    display: flex;
    align-items: center;
    gap: 1px;
}
.dot::before {
    content: "";
    width: 5px;
    height: 5px;
    border-radius: 50%;
}
.c20::before {
    background: #ebb092;
}
.c24::before {
    background: #eda96d;
}
.c28::before {
    background: #d05f5b;
}
.frame {
    position: relative;
    display: flex;
    justify-content: space-between;
    width: 181px;
    height: 281px;
    padding: 2px 1px 0 4px;
    border: 1px solid #c8c6c4;
}
.grip {
    position: absolute;
    width: 10px;
    height: 3px;
    background: #999;
}
.tl, .tr, .bl, .br {
    width: 8px;
    height: 8px;
    background: none;
    border: 0 solid #999;
}
.tl { top: 0; left: -1px; border-width: 3px 0 0 3px; }
.tr { top: 0; right: -1px; border-width: 3px 3px 0 0; }
.bl { bottom: -1px; left: -1px; border-width: 0 0 3px 3px; }
.br { bottom: -1px; right: -1px; border-width: 0 3px 3px 0; }
.tc { top: 0; left: 85px; }
.bc { bottom: -1px; left: 85px; }
.ml, .mr {
    top: 134px;
    width: 3px;
    height: 10px;
}
.ml { left: -1px; }
.mr { right: -1px; }
table {
    border-collapse: collapse;
    table-layout: fixed;
    line-height: 8px;
    white-space: nowrap;
}
th {
    font-weight: normal;
    text-align: left;
}
th, td {
    padding: 0 2px;
}
.cities {
    width: 143px;
    height: 275px;
}
.cities th {
    height: 14px;
    padding-bottom: 4px;
    border-bottom: 1px solid #6cbdf0;
}
.cities th:nth-child(1) { width: 21px; }
.cities th:nth-child(2) { width: 27px; }
.cities th:nth-child(3) { width: 29px; }
.cities th:nth-child(4) { width: 30px; }
.cities th:nth-child(2), .cities th:nth-child(3),
.cities td:nth-child(2), .cities td:nth-child(3) {
    text-align: right;
}
.cities tbody tr:nth-child(even) {
    background: #eeedec;
}
.scroll {
    display: flex;
    flex-direction: column;
    align-items: center;
    width: 6px;
    padding: 6px 0;
}
.scroll .thumb {
    width: 4px;
    height: 168px;
    margin-top: 4px;
    background: #c8c6c4;
}
.up, .down {
    width: 3px;
    height: 3px;
    border: 1px solid #777;
    border-width: 1px 0 0 1px;
    transform: rotate(45deg);
}
.down {
    margin-top: auto;
    transform: rotate(225deg);
}
.total-row {
    display: flex;
    align-items: flex-start;
    padding-top: 8px;
}
.total {
    width: 63px;
}
.total th, .total td {
    height: 9px;
    padding: 0 1px;
}
.total th {
    height: 14px;
    padding-bottom: 3px;
    border-bottom: 1px solid #a8d8f5;
}
.total th:first-child {
    width: 22px;
}
.total td:last-child {
    text-align: right;
}
.total tbody tr {
    border-bottom: 1px solid #a8d8f5;
}
.total tfoot {
    font-weight: bold;
}
.total-row .short {
    height: 30px;
    margin-left: 66px;
    padding: 3px 0;
    background: #f3f2f1;
}
.focus {
    width: 13px;
    margin-left: 6px;
}
.more {
    width: 14px;
    margin: 2px 0 0 10px;
}

/* page tabs */
.pages {
    display: flex;
    height: 29px;
    background: #f3f2f1;
}
.step {
    width: 16px;
}
.prev, .next {
    display: inline-block;
    border: 3px solid transparent;
    border-right: 4px solid #c0bebc;
}
.next {
    border: 3px solid transparent;
    border-left: 4px solid #c0bebc;
}
.page {
    width: 74px;
    background: #fff;
    border: 1px solid #c8c6c4;
    border-width: 0 1px;
    box-shadow: inset 0 -1px #f2c811;
    font-size: 11px;
    font-feature-settings: "palt";
}
.add {
    width: 32px;
    margin: 1px 0;
    background: #f2c811;
}
.add svg {
    width: 11px;
    height: 11px;
    margin: auto;
}

/* right panes */
.viz, .fields {
    position: relative;
    flex: none;
    background: #f3f2f1;
    border-left: 1px solid #e1dfdd;
}
.viz {
    width: 153px;
}
.fields {
    width: 140px;
}
.pane-head {
    display: flex;
    align-items: center;
    justify-content: space-between;
    height: 42px;
    padding: 0 12px 0 10px;
}
.pane-head h1 {
    font-size: 14px;
    line-height: 20px;
}
.fields .pane-head {
    margin-right: -13px;
}
.fields .pane-head h1, .viz h2, .viz p {
    font-feature-settings: "palt";
}
.right {
    display: block;
    width: 7px;
    height: 7px;
    border: 1px solid #555;
    border-width: 1px 1px 0 0;
    transform: rotate(45deg);
}
.gallery {
    display: grid;
    grid-template-columns: repeat(6, 1fr);
    padding: 1px 7px 0 3px;
}
.gallery button {
    display: flex;
    align-items: center;
    justify-content: center;
    height: 20px;
}
.gallery svg {
    width: 16px;
    height: 16px;
    stroke: #444;
}
.gallery .b {
    fill: #83beec;
    stroke: #2a7fc1;
}
.gallery .g {
    fill: #c8c6c4;
    stroke: #666;
}
.gallery .w {
    fill: #fff;
    stroke: #555;
}
.gallery .o, .gallery .l {
    stroke: #2a7fc1;
}
.gallery .picked svg {
    width: 20px;
    height: 20px;
    border: 2px solid #777;
}
.num span {
    width: 15px;
    border: 1px solid #777;
    background: #fff;
    color: #2a7fc1;
    font-size: 7px;
    line-height: 9px;
}
.gallery .word {
    color: #2a7fc1;
    font-size: 13px;
    font-weight: 600;
    line-height: 18px;
}
.modes {
    display: flex;
    gap: 1px;
    height: 34px;
    margin-top: 1px;
    padding-left: 10px;
    border-top: 1px solid #e1dfdd;
}
.modes button {
    width: 33px;
    height: 33px;
    border-bottom: 3px solid transparent;
}
.modes .on {
    border-bottom-color: #f2c811;
}
.modes svg {
    width: 19px;
    height: 19px;
    margin: 0 auto;
    stroke: #444;
}
.viz h4 {
    padding: 3px 10px 4px;
    font-size: 11px;
    font-weight: normal;
    line-height: 14px;
}
.well {
    display: grid;
    gap: 2px;
    margin: 1px 5px 0 4px;
    padding: 2px 2px 7px;
    border: 1px dashed #c8c6c4;
    background: #fff;
}
.well li {
    display: flex;
    align-items: center;
    height: 19px;
    padding-left: 3px;
    background: #edebe9;
    border: 1px solid #d2d0ce;
    line-height: 17px;
}
.well button {
    width: 14px;
}
.well li button:nth-child(1) {
    margin-left: auto;
}
.well svg {
    width: 8px;
    height: 8px;
    margin: auto;
    stroke: #555;
}
.open {
    display: block;
    width: 7px;
    height: 7px;
    margin: -5px auto 0;
    border: 1px solid #666;
    border-width: 0 1px 1px 0;
    transform: rotate(45deg);
}
.pane-thumb {
    position: absolute;
    top: 195px;
    right: 0;
    width: 5px;
    height: 133px;
    border-radius: 3px;
    background: #d2d0ce;
}
.viz h2 {
    padding: 10px 12px 0;
    font-size: 14px;
    line-height: 20px;
}
.viz p {
    padding: 10px 8px;
    font-size: 11px;
    line-height: 16px;
}
.search {
    display: flex;
    align-items: center;
    gap: 7px;
    height: 25px;
    margin: 3px 0 3px 3px;
    padding-left: 9px;
    border: 1px solid #d2d0ce;
    border-right: none;
    background: #fff;
}
.search svg {
    flex: none;
    width: 14px;
    height: 14px;
}
.search input {
    width: 100%;
    min-width: 0;
    padding: 0;
    border: none;
    outline: none;
    background: none;
    font: inherit;
    font-size: 11px;
}
.search input::placeholder {
    color: #333;
}
.tree {
    padding: 5px 0 0 4px;
    border-top: 1px solid #e1dfdd;
}
.node {
    display: flex;
    align-items: center;
    height: 26px;
    margin-bottom: 4px;
    font-weight: 600;
}
.node svg {
    width: 18px;
    height: 18px;
    margin: 4px 4px 0 4px;
}
.fold {
    width: 7px;
    height: 7px;
    margin: 4px 1px 0 1px;
    border: 1px solid #555;
    border-width: 1px 0 0 1px;
    transform: rotate(45deg);
}
.tree label {
    display: flex;
    align-items: center;
    height: 20px;
    padding-left: 23px;
}
.tree label b {
    width: 21px;
    padding-left: 4px;
    font-size: 11px;
}
.tree label input {
    appearance: none;
    width: 10px;
    height: 10px;
    margin: 0;
    border: 1px solid #999;
    border-radius: 2px;
    background: #fff;
}
.tree label input:checked {
    border-color: #f2c811;
    background: #f2c811;
}
.tree label input:checked::after {
    content: "";
    display: block;
    width: 5px;
    height: 3px;
    margin: 2px 0 0 1px;
    border: 1px solid #333;
    border-width: 0 0 1px 1px;
    transform: rotate(-45deg);
}
```
